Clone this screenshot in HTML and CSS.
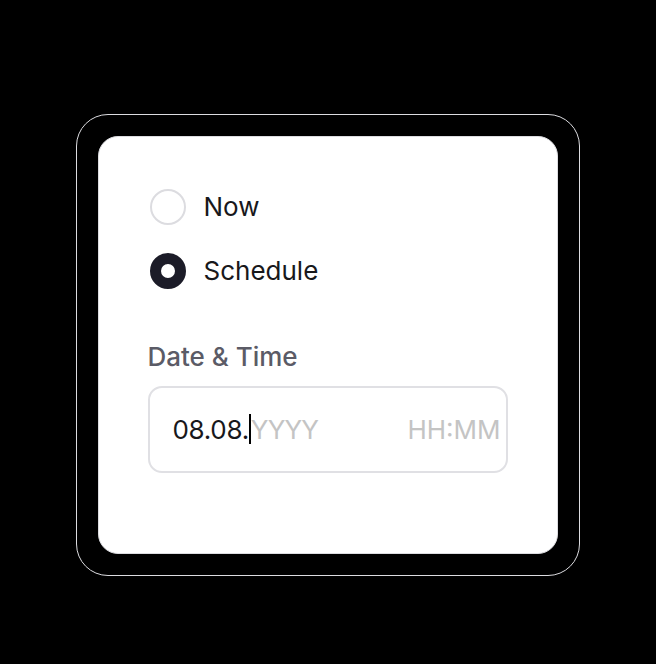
FILE: index.html
```html
<!DOCTYPE html>
<html lang="en">
<head>
<meta charset="utf-8">
<link rel="stylesheet" href="styles.css">
</head>
<body>
<div class="stage">
  <div class="frame">
    <div class="card">
      <div class="options">
        <label class="option">
          <span class="radio"></span>
          <span class="option-text">Now</span>
        </label>
        <label class="option">
          <span class="radio radio-checked"></span>
          <span class="option-text">Schedule</span>
        </label>
      </div>
      <div class="field">
        <div class="field-label">Date &amp; Time</div>
        <div class="input">
          <span class="date"><span class="typed">08.08.</span><span class="caret"></span><span class="placeholder year">YYYY</span></span>
          <span class="placeholder time">HH:MM</span>
        </div>
      </div>
    </div>
  </div>
</div>
</body>
</html>
```

FILE: styles.css
```css
* { box-sizing: border-box; }
html, body {
  margin: 0;
  padding: 0;
  background: #000;
  width: 656px;
  height: 664px;
  overflow: hidden;
  font-family: "Inter", "Noto Sans", sans-serif;
}
.stage {
  padding: 114px 0 0 76px;
}
.frame {
  width: 504px;
  height: 462px;
  border: 1.5px solid #dcdce0;
  border-radius: 32px;
  padding: 20.5px;
}
.card {
  width: 460px;
  height: 418px;
  background: #fff;
  border: 1px solid #dcdce0;
  border-radius: 20px;
  padding: 52px 49px 0 49px;
}
.options {
  display: flex;
  flex-direction: column;
  gap: 28px;
  padding-left: 2px;
}
.option {
  display: flex;
  align-items: center;
  gap: 18px;
  height: 36px;
}
.radio {
  width: 36px;
  height: 36px;
  border-radius: 50%;
  border: 2px solid #dcdce0;
  background: #fff;
  flex: none;
}
.radio-checked {
  border: 11px solid #1c1c28;
}
.option-text {
  font-size: 26px;
  color: #18181b;
}
.field {
  margin-top: 52px;
}
.field-label {
  font-size: 26px;
  font-weight: 500;
  color: #5b5b66;
  height: 32px;
  line-height: 32px;
}
.input {
  margin-top: 13px;
  width: 360px;
  height: 87px;
  border: 2px solid #e0e0e4;
  border-radius: 14px;
  display: flex;
  align-items: center;
  justify-content: space-between;
  padding: 0 5px 0 23px;
  font-size: 26px;
}
.date {
  display: flex;
  align-items: center;
}
.typed {
  color: #18181b;
  letter-spacing: -0.3px;
}
.caret {
  width: 2px;
  height: 30px;
  background: #000;
}
.placeholder { color: #c4c4c4; }
.year { letter-spacing: -0.8px; }
```
